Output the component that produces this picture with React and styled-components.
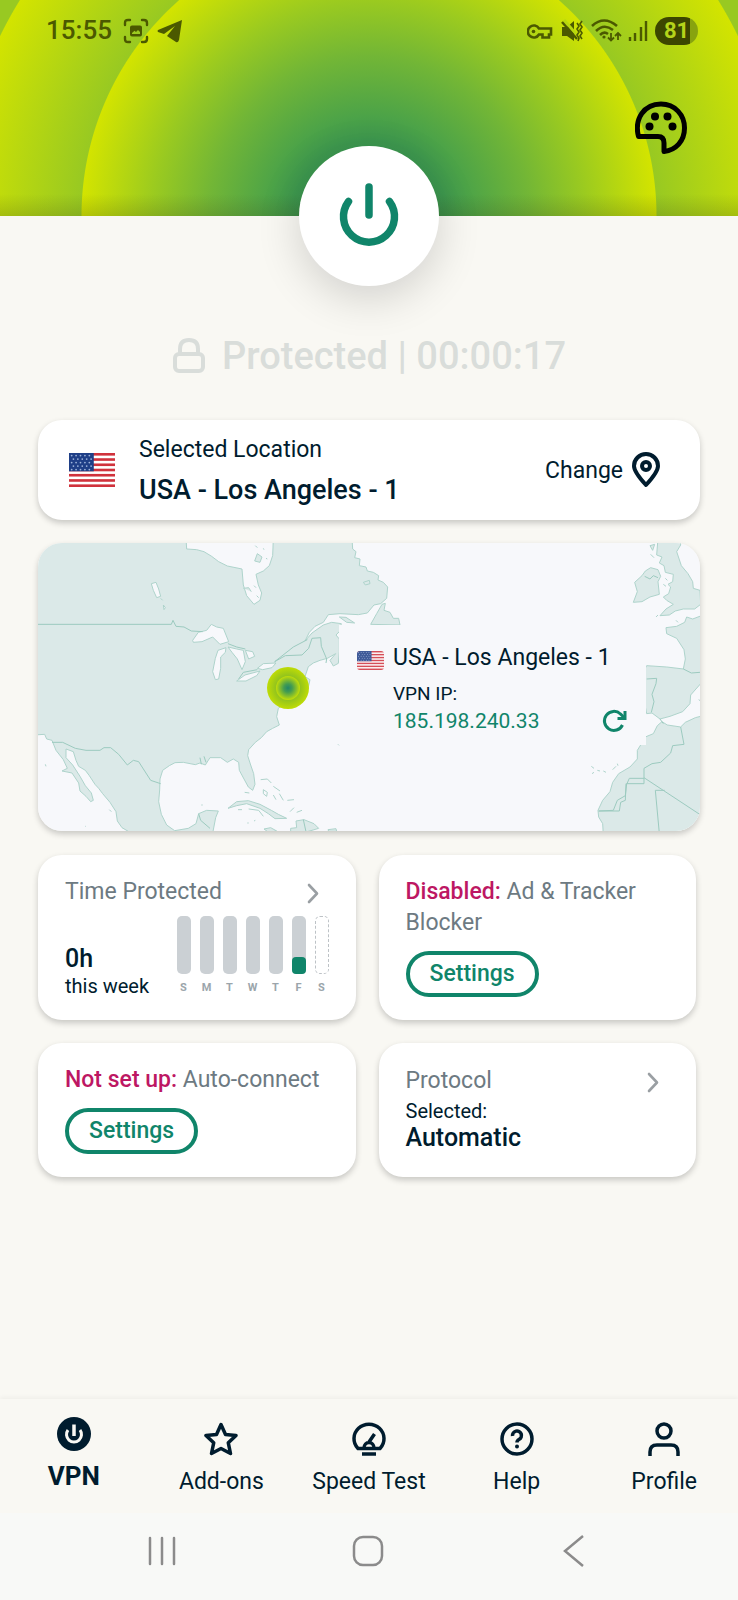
import React from 'react';
import styled, { createGlobalStyle } from 'styled-components';

const week = [
    { id: 1, day: "S", height: 0 },
    { id: 2, day: "M", height: 0 },
    { id: 3, day: "T", height: 0 },
    { id: 4, day: "W", height: 0 },
    { id: 5, day: "T", height: 0 },
    { id: 6, day: "F", height: 30 },
    { id: 7, day: "S", height: 0, upcoming: true },
];

const Flag = () => (
    <svg viewBox="0 0 52 39" width="100%" height="100%" preserveAspectRatio="none" aria-hidden="true">
        <rect width="52" height="39" fill="#fff" />
        {[0, 6, 12, 18, 24, 30, 36].map((y) => (
            <rect key={y} y={y} width="52" height="3" fill="#d0323c" />
        ))}
        <rect width="28" height="21" fill="#1f3f87" />
        {[3, 7, 11, 15, 19].map((y, row) => (
            [3, 8, 13, 18, 23].map((x) => (
                <circle key={`${x}-${y}`} cx={x + (row % 2) * 2} cy={y} r="1" fill="#9fb4dc" />
            ))
        ))}
    </svg>
);

const Chevron = () => (
    <svg width="32" height="31" viewBox="0 0 32 31" fill="none" stroke="#9a9fa3" strokeWidth="2.600" strokeLinecap="round" strokeLinejoin="round" aria-hidden="true">
        <path d="M12 9 L20 17.500 L12 26" />
    </svg>
);

const PowerGlyph = () => (
    <svg width="64" height="72" viewBox="0 0 64 72" fill="none" stroke="#10856a" strokeWidth="7.500" strokeLinecap="round" aria-hidden="true">
        <path d="M32 7 V35" />
        <path d="M11.500 21.500 A25.500 25.500 0 1 0 52.500 21.500" />
    </svg>
);

// two drawings share the card: the Americas on the left, Europe and Africa on the right
const WorldMap = () => (
    <MapSvg viewBox="0 0 662 288" preserveAspectRatio="xMidYMid slice" role="img" aria-label="Map of the server location">
        <defs>
            <radialGradient id="dotOuter">
                <stop offset="0.5" stopColor="#8abf22" />
                <stop offset="1" stopColor="#bfdc05" />
            </radialGradient>
            <radialGradient id="dotInner">
                <stop offset="0" stopColor="#238668" />
                <stop offset="0.35" stopColor="#449d50" />
                <stop offset="0.75" stopColor="#8fc326" />
                <stop offset="1" stopColor="#c2de08" />
            </radialGradient>
        </defs>
        <rect width="662" height="288" fill="#f7f8fb" />
        <g transform="translate(-8 -8) scale(0.33333)" stroke="#aed3cb" strokeWidth="3" strokeLinejoin="round">
            <g fill="#dbe9e8">
                <path d="M10 10 L468 10 L470 42 L500 44 L522 50 L545 64 L566 80 L592 93 L636 102 L640 150 L650 182 L672 208 L690 196 L695 174 L685 150 L678 118 L700 108 L718 92 L728 62 L730 10 L966 10 L968 42 L978 50 L974 68 L990 72 L988 92 L1008 96 L1012 108 L1030 112 L1046 122 L1044 135 L1060 142 L1073 156 L1070 190 L1052 206 L1032 210 L1012 234 L985 239 L930 236 L895 239 L880 262 L855 274 L838 292 L825 318 L846 294 L880 270 L905 262 L934 266 L928 290 L918 300 L928 312 L928 350 L925 385 L910 393 L900 376 L917 356 L892 370 L870 376 L850 384 L835 395 L825 425 L840 434 L834 462 L790 490 L765 505 L745 520 L740 545 L748 570 L728 580 L710 590 L694 608 L676 622 L656 644 L653 662 L662 690 L671 716 L675 748 L668 766 L655 756 L642 732 L628 706 L626 682 L610 672 L592 682 L572 668 L540 668 L526 690 L510 684 L496 689 L460 682 L435 683 L418 692 L398 706 L390 732 L389 765 L386 800 L394 838 L410 870 L434 887 L475 880 L498 866 L506 836 L530 826 L565 828 L557 848 L548 895 L305 895 L276 878 L262 858 L258 830 L240 802 L218 776 L206 760 L195 748 L178 722 L166 706 L146 694 L138 676 L130 650 L108 642 L108 668 L128 690 L150 724 L166 752 L184 774 L190 796 L182 800 L168 784 L150 768 L146 744 L126 714 L96 708 L112 700 L100 674 L78 646 L66 616 L50 612 L44 598 L10 600 Z" />
                <path d="M1022 268 L1040 236 L1056 208 L1066 205 L1062 226 L1080 232 L1090 250 L1106 250 L1110 270 Z" />
                <path d="M928 246 L948 247 L974 264 L950 262 Z" />
                <path d="M594 820 L620 800 L655 797 L690 808 L724 826 L745 838 L770 850 L735 851 L715 836 L690 820 L650 806 L620 812 Z" />
                <path d="M782 880 L800 878 L798 858 L822 854 L852 866 L866 880 L846 886 L812 895 L782 892 Z" />
                <path d="M702 882 L722 878 L740 888 L716 892 Z" />
                <path d="M894 884 L918 881 L920 889 L896 889 Z" />
                <path d="M674 78 L682 56 L696 66 L690 82 Z M676 32 l6 6 M700 40 l2 4 M708 70 l4 2" />
                <path d="M640 160 L656 158 L664 170 M672 152 l6 6 M680 182 l6 6" />
                <path d="M692 734 L712 732 L724 744 M700 764 L712 772 L710 784 L700 776 Z M730 754 l20 14 M748 776 l12 20 M772 796 l20 -2 M780 830 l12 -12 M800 832 l16 -6 M730 780 l8 14" fill="none" />
                <path d="M624 824 l12 0 M652 864 l4 0 M672 858 l4 -2 M656 822 l30 4 l14 18 M516 808 l0 4 M46 688 l2 6 M238 824 l6 6 M166 874 l2 0 M924 628 l3 3 M644 772 l14 2" fill="none" />
                <path d="M1000 142 l18 -6 l2 10 l-14 4 Z" />
            </g>
            <g fill="#f7f8fb">
                <path d="M364 146 L378 142 L386 162 L392 184 L380 188 L370 166 Z M392 190 l6 6 M400 210 l6 8 l-4 6 Z" />
                <path d="M488 316 L505 292 L530 286 L544 268 L560 276 L580 280 L596 320 L570 328 L548 306 L516 320 L490 322 Z" />
                <path d="M556 434 L548 410 L556 370 L564 346 L588 338 L586 352 L572 366 L572 400 L566 432 Z" />
                <path d="M594 336 L620 342 L640 346 L646 380 L636 404 L622 372 L606 352 Z" />
                <path d="M646 346 L668 350 L674 364 L656 372 Z" />
                <path d="M620 438 L645 420 L690 408 L680 422 L648 438 Z" />
                <path d="M682 400 L700 386 L738 384 L726 398 L698 404 Z" />
            </g>
            <path d="M20 268 L424 268 L429 256 L438 274 L462 276 L484 288 L518 290 M594 326 L620 336 L646 342 M626 432 L640 412 L682 404 M734 380 L766 362 L816 360 L836 340 L846 310 L872 308 L874 334 L890 372 L888 384 M734 380 L790 336 L832 314 M66 622 L98 622 L136 640 L168 646 L210 646 L222 638 L242 638 L266 658 L292 690 L310 676 L326 680 L362 736 L392 746 M506 836 L512 856 L540 880 M820 854 L828 890 M510 668 l4 20 M522 664 l6 18" fill="none" stroke="#9ccabf" />
        </g>
        <g transform="translate(292 -8) scale(0.33333)" stroke="#aed3cb" strokeWidth="3" strokeLinejoin="round">
            <g fill="#dbe9e8">
                <path d="M984 10 L1050 10 L1052 30 L1040 50 L1054 92 L1074 116 L1088 140 L1090 160 L1110 166 L1112 208 L1094 222 L1060 222 L1036 228 L1018 240 L990 242 L1008 222 L1030 208 L1010 196 L1000 186 L1016 176 L1022 156 L1014 148 L1028 140 L1030 118 L1006 112 L1002 92 L988 84 L996 66 L980 60 Z" />
                <path d="M910 202 L922 170 L914 142 L936 122 L946 108 L962 98 L984 104 L992 124 L984 140 L988 178 L960 186 L936 200 Z M960 32 L974 28 L968 46 Z M962 58 l10 10" />
                <path d="M1120 240 L1088 252 L1070 246 L1064 262 L1040 274 L1008 278 L1010 296 L1040 310 L1062 344 L1066 372 L1060 402 L1010 396 L950 392 L930 430 L950 536 L966 534 L990 552 L1020 544 L1058 530 L1080 506 L1082 480 L1112 446 L1120 440 Z" />
                <path d="M1120 542 L1096 548 L1066 562 L1052 576 L1012 570 L996 560 L982 572 L970 596 L946 606 L932 630 L922 646 L922 672 L900 696 L866 716 L848 742 L840 770 L818 796 L804 826 L806 846 L818 866 L820 900 L1120 900 Z" />
                <path d="M784 694 l8 6 M786 716 l6 -4 M802 706 l8 2 M820 708 l8 4 M848 704 l10 -10 M862 686 l2 6 M1106 494 l6 4 M978 246 l6 -6 M1038 256 l6 6 M1006 130 l6 6 M1000 148 l8 6" />
            </g>
            <path d="M944 124 L960 132 L970 122 L984 128 M950 432 L980 430 L978 446 L966 478 L972 500 L964 532 M1060 402 L1084 414 L1110 412 M1052 576 L1062 628 L1028 632 L1022 654 L992 682 L966 686 L942 700 L942 746 L890 746 L886 782 L862 796 L850 826 L806 828 M942 728 L1112 840 M942 730 L898 730 L890 748 M888 746 L886 796 L872 802 L868 828 L806 828 M1004 766 L976 766 L988 895 M990 552 L1000 566" fill="none" stroke="#9ccabf" />
        </g>
        <circle cx="250" cy="145" r="21" fill="url(#dotOuter)" />
        <circle cx="250" cy="145" r="12" fill="url(#dotInner)" />
    </MapSvg>
);

const StatusIcons = () => (
    <svg width="172" height="30" viewBox="527 15 172 30" fill="none" stroke="currentColor" strokeWidth="2.600" aria-hidden="true">
        <path d="M539 27.500 A6 6 0 1 0 539 33.500 L542.500 33.500 L542.500 36.500 L549 36.500 L549 33.500 L551 33.500 V27.500 Z" />
        <circle cx="533.500" cy="30.500" r="1.800" fill="currentColor" stroke="none" />
        <path d="M562 26 L567 26 L574 20 V40 L567 35 H562 Z" fill="currentColor" stroke="none" />
        <path d="M564 19 L576 33" stroke="#b8d80e" strokeWidth="3" />
        <path d="M562 21 L577 38" strokeWidth="2.400" />
        <path d="M577 22 l2 3 l-2 3 l2 3 l-2 3 l2 3 l-1 3 M582 20 l-2 3 l2 3 l-2 3 l2 3 l-2 3 l2 3" strokeWidth="1.600" />
        <path d="M592 25 Q604 14 617 25 M596 30 Q604 22 613 29 M600 34 Q604 30 608 33" />
        <circle cx="604" cy="36" r="1.600" fill="currentColor" stroke="none" />
        <path d="M611 32 V39 M608 36.500 L611 39.500 L614 36.500 M618 39 V32 M615 35 L618 32 L621 35" strokeWidth="1.800" />
        <path d="M630 36 V40 M635 32 V40 M641 26 V40 M646 20 V40" strokeWidth="2.400" />
    </svg>
);

const VpnIcon = () => (
    <svg width="34" height="34" viewBox="0 0 34 34" fill="none" stroke="#f9f8f3" strokeWidth="3" aria-hidden="true">
        <circle cx="17" cy="17" r="17" fill="#001c2e" stroke="none" />
        <path d="M17 7.500 V19" strokeWidth="3.500" />
        <path d="M11 13 A7.500 7.500 0 1 0 23 13" />
    </svg>
);

const StarIcon = () => (
    <NavSvg viewBox="0 0 34 34">
        <path d="M17 2.500 L21.500 12.500 L32 13.500 L24.300 20.800 L26.500 31.500 L17 26.500 L7.500 31.500 L9.700 20.800 L2 13.500 L12.500 12.500 Z" />
    </NavSvg>
);

const SpeedIcon = () => (
    <NavSvg viewBox="0 0 34 34">
        <path d="M6 26.500 A15 14.500 0 1 1 28 26.500 Z" />
        <path d="M12 26 A5 5.500 0 0 1 22 26 M17 20 L22.500 12" />
        <path d="M10 32 H24" />
    </NavSvg>
);

const HelpIcon = () => (
    <NavSvg viewBox="0 0 34 34">
        <circle cx="17" cy="17" r="15" />
        <path d="M12.500 14 A4.500 4.500 0 1 1 19 17.500 Q17 18.500 17 20.500" />
        <circle cx="17" cy="24.500" r="2" fill="#001c2e" stroke="none" />
    </NavSvg>
);

const ProfileIcon = () => (
    <NavSvg viewBox="0 0 34 34">
        <circle cx="17" cy="9" r="7" />
        <path d="M3 34 V30 Q3 23 10 23 H24 Q31 23 31 30 V34" />
    </NavSvg>
);

const tabs = [
    { id: 1, title: "VPN", icon: <VpnIcon />, active: true },
    { id: 2, title: "Add-ons", icon: <StarIcon /> },
    { id: 3, title: "Speed Test", icon: <SpeedIcon /> },
    { id: 4, title: "Help", icon: <HelpIcon /> },
    { id: 5, title: "Profile", icon: <ProfileIcon /> },
];

class App extends React.Component {
    renderWeek = () => {
        return week.map((item) => (
            <Day key={item.id}>
                <Bar $upcoming={item.upcoming}>
                    {item.height > 0 && <BarFill style={{height: `${item.height}%`}} />}
                </Bar>
                <DayName>{item.day}</DayName>
            </Day>
        ))
    };

    renderTabs = () => {
        return tabs.map((tab) => (
            <Tab href="#" key={tab.id} $active={tab.active}>
                {tab.icon}
                {tab.title}
            </Tab>
        ))
    };

    render() {
        return (
            <>
                <GlobalStyle />
                <Page>
                    <Header>
                        <StatusBar>
                            <StatusGroup>
                                <Clock>15:55</Clock>
                                <svg width="26" height="26" viewBox="0 0 26 26" fill="none" stroke="currentColor" strokeWidth="2.400" strokeLinecap="round" aria-hidden="true">
                                    <path d="M2 7 V5 Q2 2 5 2 H7 M19 2 H21 Q24 2 24 5 V7 M24 19 V21 Q24 24 21 24 H19 M7 24 H5 Q2 24 2 21 V19" />
                                    <path fillRule="evenodd" d="M9 7.500 H17 Q19 7.500 19 9.500 V16.500 Q19 18.500 17 18.500 H9 Q7 18.500 7 16.500 V9.500 Q7 7.500 9 7.500 Z M9 16 H17 V14 L15 12 L13 14 L11.500 12.800 L9 15 Z" fill="currentColor" stroke="none" />
                                </svg>
                                <svg width="26" height="26" viewBox="0 0 26 26" fill="currentColor" aria-hidden="true">
                                    <path d="M25 2 L1 12 Q0 13 1 14 L7 16 L18 8 L10 18 L19 24 Q21 25 22 22 Z" />
                                </svg>
                            </StatusGroup>
                            <StatusGroup>
                                <StatusIcons />
                                <Battery>81</Battery>
                            </StatusGroup>
                        </StatusBar>
                        <ThemeButton aria-label="Theme">
                            <svg width="52" height="54" viewBox="0 0 52 54" fill="none" stroke="#000" strokeWidth="5" strokeLinejoin="round" aria-hidden="true">
                                <path d="M3.500 35.500 C-1 18 9 3 26 3 C40 3 49.500 14 49.500 27 C49.500 40 41 49 29 50.500 V42 Q29 35.500 23 35.500 Z" />
                                <g fill="#000" stroke="none">
                                    <circle cx="14.500" cy="25.500" r="4" />
                                    <circle cx="20" cy="15.500" r="4" />
                                    <circle cx="32.500" cy="15.500" r="4" />
                                    <circle cx="37.500" cy="25.500" r="4" />
                                </g>
                            </svg>
                        </ThemeButton>
                        <PowerButton aria-label="Toggle connection"><PowerGlyph /></PowerButton>
                    </Header>

                    <Protection>
                        <svg width="34" height="36" viewBox="0 0 34 36" fill="none" stroke="#d9ddda" strokeWidth="4" aria-hidden="true">
                            <rect x="3" y="16" width="28" height="17" rx="4" />
                            <path d="M8 16 V11 Q8 2 17 2 Q26 2 26 11 V16" />
                        </svg>
                        Protected | 00:00:17
                    </Protection>

                    <Main>
                        <LocationCard>
                            <LargeFlag><Flag /></LargeFlag>
                            <LocationText>
                                <p>Selected Location</p>
                                <LocationName>USA - Los Angeles - 1</LocationName>
                            </LocationText>
                            <ChangeButton>
                                Change
                                <svg width="28" height="36" viewBox="0 0 28 36" fill="none" stroke="#001c2e" strokeWidth="4" strokeLinejoin="round" aria-hidden="true">
                                    <path d="M14 33 Q2 20 2 14 A12 12 0 0 1 26 14 Q26 20 14 33 Z" />
                                    <circle cx="14" cy="14" r="4" />
                                </svg>
                            </ChangeButton>
                        </LocationCard>

                        <MapCard>
                            <WorldMap />
                            <Popup>
                                <SmallFlag><Flag /></SmallFlag>
                                <PopupText>
                                    <p>USA - Los Angeles - 1</p>
                                    <IpLabel>VPN IP:</IpLabel>
                                    <IpRow>
                                        <Ip>185.198.240.33</Ip>
                                        <RefreshButton aria-label="Refresh IP">
                                            <svg width="26" height="26" viewBox="0 0 26 26" fill="none" stroke="#10856a" strokeWidth="3" aria-hidden="true">
                                                <path d="M20.500 16 A9.500 9.500 0 1 1 18.500 5 Q20.500 6.500 22 9" />
                                                <path d="M23 2 V9.500 H15.500" />
                                            </svg>
                                        </RefreshButton>
                                    </IpRow>
                                </PopupText>
                            </Popup>
                        </MapCard>

                        <Grid>
                            <Card>
                                <CardTitle>Time Protected <Chevron /></CardTitle>
                                <TimeRow>
                                    <div>
                                        <Value>0h</Value>
                                        <Small>this week</Small>
                                    </div>
                                    <Chart>{this.renderWeek()}</Chart>
                                </TimeRow>
                            </Card>
                            <Card>
                                <CardText><Alert>Disabled:</Alert> Ad &amp; Tracker Blocker</CardText>
                                <SettingsButton>Settings</SettingsButton>
                            </Card>
                            <Card>
                                <CardText><Alert>Not set up:</Alert> Auto-connect</CardText>
                                <SettingsButton>Settings</SettingsButton>
                            </Card>
                            <ProtocolCard>
                                <CardTitle>Protocol <Chevron /></CardTitle>
                                <div>
                                    <Small>Selected:</Small>
                                    <Value>Automatic</Value>
                                </div>
                            </ProtocolCard>
                        </Grid>
                    </Main>

                    <Tabs>{this.renderTabs()}</Tabs>
                    <SystemBar>
                        <SystemButton aria-label="Recents">
                            <svg width="32" height="32" viewBox="0 0 32 32" stroke="#8b8b8b" strokeWidth="2.500" strokeLinecap="round" aria-hidden="true">
                                <path d="M4 3 V29 M16 3 V29 M28 3 V29" />
                            </svg>
                        </SystemButton>
                        <SystemButton aria-label="Home">
                            <svg width="32" height="32" viewBox="0 0 32 32" fill="none" stroke="#8b8b8b" strokeWidth="2.500" aria-hidden="true">
                                <rect x="2" y="2" width="28" height="28" rx="9" />
                            </svg>
                        </SystemButton>
                        <SystemButton aria-label="Back">
                            <svg width="32" height="32" viewBox="0 0 32 32" fill="none" stroke="#8b8b8b" strokeWidth="2.500" aria-hidden="true">
                                <path d="M25 1 L7 16 L25 31" />
                            </svg>
                        </SystemButton>
                    </SystemBar>
                </Page>
            </>
        )
    }
}

const GlobalStyle = createGlobalStyle`
    body {
        margin: 0;
        background: #f9f8f3;
        color: #001c2e;
        font: 400 23px/31px Roboto, "Liberation Sans", sans-serif;
    }
    p {
        margin: 0;
    }
    button {
        background: none;
        border: none;
        padding: 0;
        color: inherit;
        font: inherit;
        cursor: pointer;
    }
    svg {
        display: block;
        flex-shrink: 0;
    }
    * {
        box-sizing: border-box;
    }
`
const Page = styled.div`
    display: flex;
    flex-direction: column;
    min-height: 100vh;
`
const Header = styled.header`
    position: relative;
    display: flex;
    flex-direction: column;
    height: 216px;
    background:
        linear-gradient(to top, rgba(60, 70, 20, 0.2), transparent 22px),
        radial-gradient(circle at 50% 100%, #2f8c58 0, #3d974e 76px, #4ca348 100px, #72b636 160px, #9aca20 215px, #d3e400 287px, #98c922 288px, #d3e400 410px, #98c922 411px);
`
const StatusBar = styled.div`
    display: flex;
    justify-content: space-between;
    align-items: center;
    height: 61px;
    padding: 0 40px 0 46px;
    color: #4b5900;
`
const StatusGroup = styled.div`
    display: flex;
    align-items: center;
    gap: 8px;
`
const Clock = styled.span`
    font-size: 26px;
    font-weight: 500;
    margin-right: 3px;
`
const Battery = styled.span`
    width: 43px;
    margin-left: -52px;
    border-radius: 14px;
    background: linear-gradient(to right, #3c4600 35px, #87a30f 35px);
    color: #b4d31a;
    font-size: 22px;
    font-weight: 700;
    line-height: 28px;
    text-align: center;
`
const ThemeButton = styled.button`
    align-self: flex-end;
    margin: 40px 51px 0 0;
`
const PowerButton = styled.button`
    position: absolute;
    left: 50%;
    bottom: 0;
    display: flex;
    align-items: center;
    justify-content: center;
    width: 140px;
    height: 140px;
    border-radius: 50%;
    transform: translate(-50%, 50%);
    && {
        background: #fff;
    }
    box-shadow: 0 12px 44px rgba(0, 0, 0, 0.16);
`
const Protection = styled.div`
    display: flex;
    align-items: center;
    justify-content: center;
    gap: 16px;
    padding: 111px 0 35px;
    color: #d9ddda;
    font-size: 38px;
    font-weight: 500;
    line-height: 58px;
`
const Main = styled.main`
    display: flex;
    flex-direction: column;
    gap: 23px;
    padding: 0 38px 40px;
`
const LocationCard = styled.section`
    display: flex;
    align-items: center;
    padding: 10px 40px 10px 31px;
    border-radius: 24px;
    background: #fff;
    box-shadow: 0 3px 6px rgba(0, 0, 0, 0.2);
`
const LargeFlag = styled.span`
    width: 46px;
    height: 34px;
`
const LocationText = styled.div`
    flex: 1;
    margin-left: 24px;
    line-height: 40px;
`
const LocationName = styled.p`
    font-size: 27px;
    font-weight: 500;
`
const ChangeButton = styled.button`
    display: flex;
    align-items: center;
    gap: 9px;
`
const MapCard = styled.section`
    position: relative;
    border-radius: 24px;
    overflow: hidden;
    box-shadow: 0 3px 6px rgba(0, 0, 0, 0.2);
`
const MapSvg = styled.svg`
    width: 100%;
`
const Popup = styled.div`
    position: absolute;
    top: 82px;
    right: 54px;
    display: flex;
    gap: 9px;
    width: 307px;
    padding: 17px 18px 8px 18px;
    background: #f7f8fb;
`
const SmallFlag = styled.span`
    width: 27px;
    height: 19px;
    margin-top: 9px;
    border-radius: 3px;
    overflow: hidden;
    opacity: 0.85;
`
const PopupText = styled.div`
    flex: 1;
`
const IpLabel = styled.p`
    margin-top: 8px;
    font-size: 19px;
    line-height: 25px;
`
const IpRow = styled.div`
    display: flex;
    align-items: center;
    justify-content: space-between;
`
const Ip = styled.span`
    color: #10856a;
    font-size: 21px;
`
const RefreshButton = styled.button`
    display: block;
`
const Grid = styled.div`
    display: grid;
    grid-template-columns: 1fr 1fr;
    gap: 23px;
    padding: 1px 4px 0 0;
`
const Card = styled.section`
    padding: 21px 27px 23px;
    border-radius: 24px;
    background: #fff;
    box-shadow: 0 3px 6px rgba(0, 0, 0, 0.2);
`
const ProtocolCard = styled(Card)`
    display: flex;
    flex-direction: column;
    justify-content: space-between;
    padding: 22px 27px;
`
const CardTitle = styled.div`
    display: flex;
    justify-content: space-between;
    color: #6d7a82;
`
const CardText = styled.p`
    margin-bottom: 13px;
    color: #6d7a82;
`
const Alert = styled.span`
    color: #bd1763;
    font-weight: 500;
`
const SettingsButton = styled.button`
    && {
        display: block;
        padding: 0 20px;
        border: 4px solid #10856a;
        border-radius: 23px;
        color: #10856a;
        font-weight: 500;
        line-height: 38px;
    }
`
const TimeRow = styled.div`
    display: flex;
    align-items: flex-end;
    justify-content: space-between;
    padding-top: 9px;
`
const Value = styled.p`
    font-size: 25px;
    font-weight: 500;
    line-height: 34px;
`
const Small = styled.p`
    font-size: 20px;
    line-height: 20px;
`
const Chart = styled.div`
    display: flex;
    gap: 9px;
`
const Day = styled.div`
    display: flex;
    flex-direction: column;
    align-items: center;
    gap: 6px;
    width: 14px;
`
const Bar = styled.div`
    display: flex;
    align-items: flex-end;
    width: 100%;
    height: 58px;
    border: ${(props) => (props.$upcoming ? "1px dashed #bdc2c6" : "none")};
    border-radius: 5px;
    background: ${(props) => (props.$upcoming ? "none" : "#cbd0d4")};
`
const BarFill = styled.div`
    width: 100%;
    border-radius: 4px;
    background: #10856a;
`
const DayName = styled.span`
    color: #9ba5ab;
    font-size: 11px;
    font-weight: 700;
    line-height: 16px;
`
const Tabs = styled.nav`
    display: grid;
    grid-template-columns: repeat(5, 1fr);
    height: 114px;
    margin-top: auto;
    box-shadow: 0 -2px 4px rgba(0, 0, 0, 0.04);
`
const Tab = styled.a`
    display: flex;
    flex-direction: column;
    align-items: center;
    gap: 10px;
    padding-top: ${(props) => (props.$active ? "18px" : "23px")};
    color: #001c2e;
    font-size: ${(props) => (props.$active ? "26px" : "23px")};
    font-weight: ${(props) => (props.$active ? 700 : 400)};
    text-decoration: none;
`
const NavSvg = styled.svg.attrs({ 'aria-hidden': true })`
    width: 34px;
    height: 34px;
    fill: none;
    stroke: #001c2e;
    stroke-width: 3.5;
    stroke-linejoin: round;
`
const SystemBar = styled.div`
    display: flex;
    justify-content: center;
    gap: 174px;
    height: 87px;
    padding: 6px 3px 0 0;
    background: #f8f9f7;
`
const SystemButton = styled.button`
    display: flex;
    align-items: center;
    height: 64px;
`

export default App;
